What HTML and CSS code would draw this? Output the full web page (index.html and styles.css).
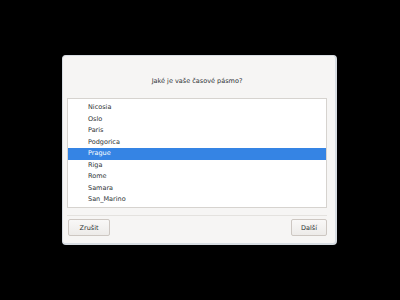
FILE: index.html
```html
<!DOCTYPE html>
<html lang="cs">
<head>
  <meta charset="UTF-8" />
  <title>Časové pásmo</title>
  <link rel="stylesheet" href="styles.css">
</head>
<body>

<div class="dialog">
  <div class="title">Jaké je vaše časové pásmo?</div>

  <ul class="zones">
    <li>Nicosia</li>
    <li>Oslo</li>
    <li>Paris</li>
    <li>Podgorica</li>
    <li class="selected">Prague</li>
    <li>Riga</li>
    <li>Rome</li>
    <li>Samara</li>
    <li>San_Marino</li>
  </ul>

  <div class="actions">
    <button>Zrušit</button>
    <button>Další</button>
  </div>
</div>

</body>
</html>
```

FILE: styles.css
```css
body {
  margin: 0;
  width: 400px;
  height: 300px;
  background: #000;
  font-family: 'DejaVu Sans', sans-serif;
  color: #2e3436;
  overflow: hidden;
}

.dialog {
  box-sizing: border-box;
  width: 275px;
  height: 190px;
  margin: 55px 0 0 62px;
  background: #f6f5f4;
  border: 1px solid #d8dde3;
  border-right-width: 2px;
  border-bottom-width: 2px;
  border-radius: 4px;
  display: flex;
  flex-direction: column;
  padding: 0 8px 0 4px;
}

.title {
  font-size: 6.5px;
  text-align: center;
  margin-top: 21px;
  height: 21px;
}

.zones {
  list-style: none;
  margin: 0;
  padding: 3px 0 2px;
  height: 110px;
  box-sizing: border-box;
  background: #fff;
  border: 1px solid #d6d3cf;
}

.zones li {
  height: 11.5px;
  line-height: 11.5px;
  font-size: 6.5px;
  padding-left: 20px;
}

.zones li.selected {
  background: #3584e4;
  color: #fff;
}

.actions {
  margin-top: 7px;
  border-top: 1px solid #e4e2df;
  padding-top: 3px;
  display: flex;
  justify-content: space-between;
}

button {
  font-family: 'DejaVu Sans', sans-serif;
  font-size: 6.5px;
  color: #2e3436;
  height: 17px;
  padding: 0 9px;
  background: linear-gradient(#f9f8f7, #edebe9);
  border: 1px solid #cdc7c2;
  border-radius: 2px;
  margin-left: 1px;
}

button:first-child {
  width: 42px;
}
```
